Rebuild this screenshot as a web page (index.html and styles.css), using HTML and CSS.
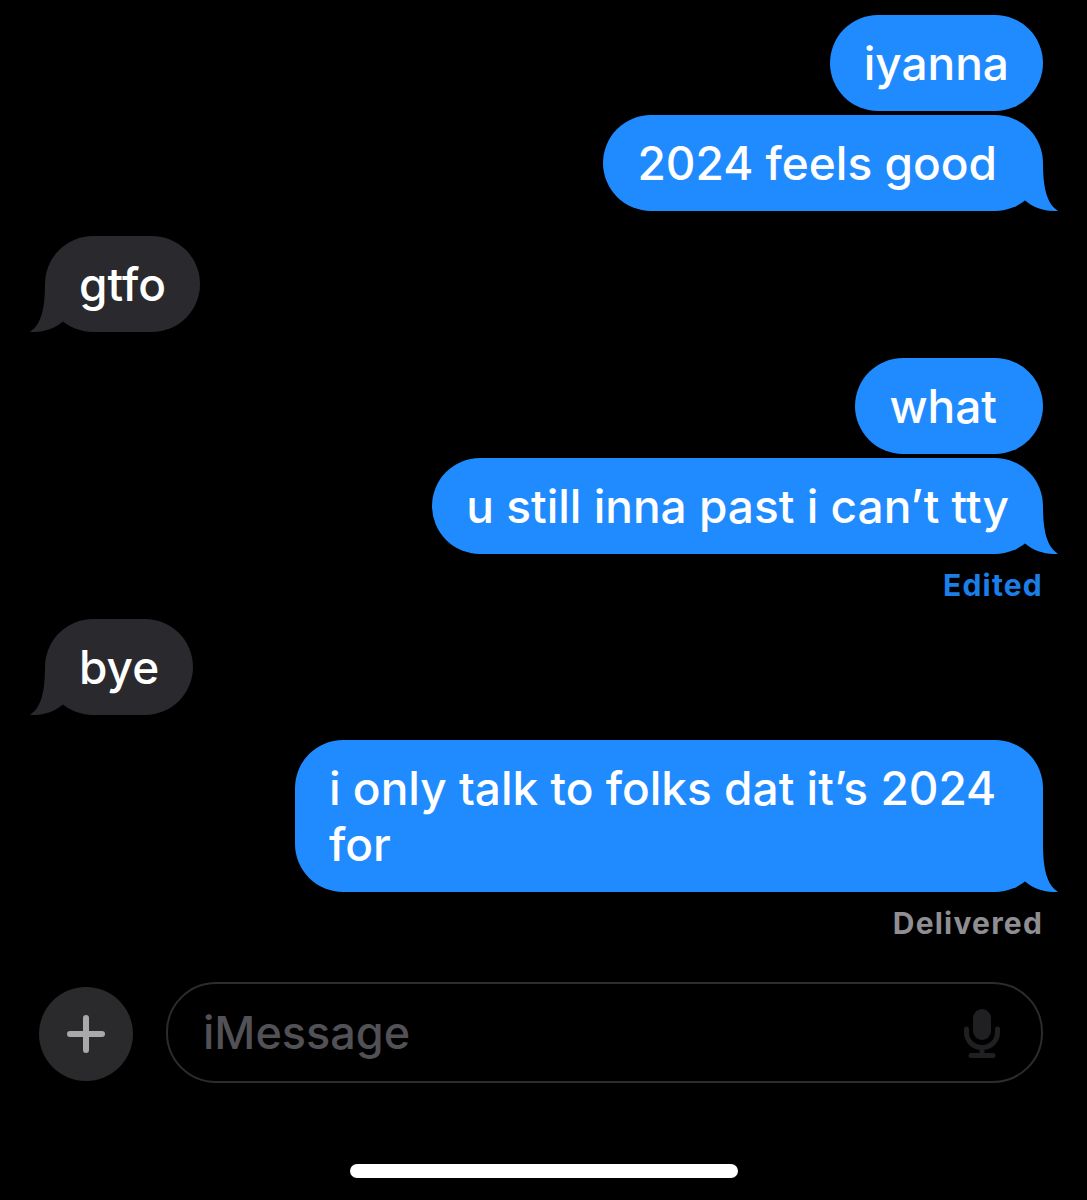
FILE: index.html
```html
<!DOCTYPE html>
<html lang="en">
<head>
  <meta charset="UTF-8" />
  <meta name="viewport" content="width=device-width, initial-scale=1.0"/>
  <title>Messages</title>
  <link rel="stylesheet" href="styles.css">
</head>
<body>
  <main class="thread">
    <div class="bubble sent">iyanna</div>
    <div class="bubble sent trailing">2024 feels good
      <svg class="tail" viewBox="0 0 40 50"><path d="M25 2C25 27 29 43 40 49.7C28 51 16 47 7 39.5L0 20Z"/></svg>
    </div>

    <div class="bubble received">gtfo
      <svg class="tail" viewBox="0 0 40 50"><path d="M25 2C25 27 29 43 40 49.7C28 51 16 47 7 39.5L0 20Z"/></svg>
    </div>

    <div class="bubble sent trailing group-start">what</div>
    <div class="bubble sent">u still inna past i can’t tty
      <svg class="tail" viewBox="0 0 40 50"><path d="M25 2C25 27 29 43 40 49.7C28 51 16 47 7 39.5L0 20Z"/></svg>
    </div>
    <div class="status edited">Edited</div>

    <div class="bubble received after-status">bye
      <svg class="tail" viewBox="0 0 40 50"><path d="M25 2C25 27 29 43 40 49.7C28 51 16 47 7 39.5L0 20Z"/></svg>
    </div>

    <div class="bubble sent long">i only talk to folks dat it’s 2024 for
      <svg class="tail" viewBox="0 0 40 50"><path d="M25 2C25 27 29 43 40 49.7C28 51 16 47 7 39.5L0 20Z"/></svg>
    </div>
    <div class="status delivered">Delivered</div>
  </main>

  <!-- Composer -->
  <form class="composer">
    <button type="button" class="plus-btn" aria-label="Add">
      <svg viewBox="0 0 38 38" width="38" height="38"><path d="M19 3V35M3 19H35"/></svg>
    </button>
    <div class="input-box">
      <span class="placeholder">iMessage</span>
      <svg class="mic" viewBox="0 0 36 50" width="36" height="50">
        <rect x="9" y="1" width="18" height="31" rx="9"/>
        <path class="mic-line" d="M2.5 21V24C2.5 33 9 39.5 18 39.5C27 39.5 33.5 33 33.5 24V21M18 39.5V47M7 47.5H29"/>
      </svg>
    </div>
  </form>

  <div class="home-bar"></div>
</body>
</html>
```

FILE: styles.css
```css
* {
  box-sizing: border-box;
}

body {
  margin: 0;
  height: 1200px;
  overflow: hidden;
  background-color: #000;
  color: #fff;
  font-family: 'Inter', 'Liberation Sans', sans-serif;
  padding: 15px 44px 0 39px;
}

.thread {
  display: flex;
  flex-direction: column;
  align-items: flex-end;
}

.bubble {
  position: relative;
  padding: 20px 34px;
  border-radius: 48px;
  font-size: 46px;
  line-height: 56px;
  font-weight: 500;
  margin-top: 4px;
}

.thread > .bubble:first-child {
  margin-top: 0;
}

.sent {
  background-color: #1f8bff;
}

/* these two were sent with a trailing space */
.trailing {
  padding-right: 46px;
}

.received {
  align-self: flex-start;
  margin-left: 6px;
  margin-top: 25px;
  background-color: #2a2a2e;
}

.group-start {
  margin-top: 26px;
}

.after-status {
  margin-top: 17px;
}

.long {
  width: 748px;
  margin-top: 25px;
}

.tail {
  position: absolute;
  right: -15px;
  bottom: 0;
  width: 40px;
  height: 50px;
  overflow: visible;
}

.sent .tail {
  fill: #1f8bff;
}

.received .tail {
  right: auto;
  left: -15px;
  fill: #2a2a2e;
  transform: scaleX(-1);
}

.status {
  margin-top: 14px;
  font-size: 30px;
  line-height: 34px;
  font-weight: 700;
  letter-spacing: 1.2px;
}

.edited {
  color: #1a7fe8;
}

.delivered {
  color: #8e8e93;
}

.composer {
  display: flex;
  align-items: flex-start;
  gap: 33px;
  margin-top: 42px;
}

.plus-btn {
  flex: none;
  display: flex;
  align-items: center;
  justify-content: center;
  width: 94px;
  height: 94px;
  margin-top: 5px;
  padding: 0;
  border: none;
  border-radius: 50%;
  background-color: #2a2a2c;
}

.plus-btn path {
  fill: none;
  stroke: #a9a9ac;
  stroke-width: 6;
  stroke-linecap: round;
}

.input-box {
  flex: 1;
  display: flex;
  align-items: center;
  justify-content: space-between;
  height: 101px;
  padding: 0 41px 0 35px;
  border: 2.5px solid #2c2c2e;
  border-radius: 50px;
}

.placeholder {
  font-size: 45px;
  font-weight: 500;
  color: #515156;
}

.mic {
  fill: #202022;
}

.mic-line {
  fill: none;
  stroke: #202022;
  stroke-width: 5;
  stroke-linecap: round;
}

.home-bar {
  width: 388px;
  height: 14px;
  margin: 81px 0 0 311px;
  border-radius: 7px;
  background-color: #fff;
}
```
